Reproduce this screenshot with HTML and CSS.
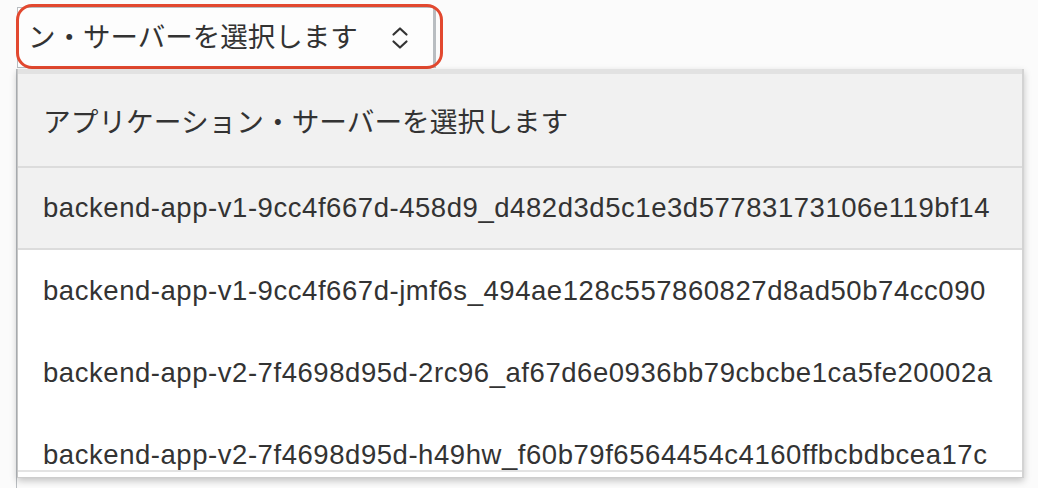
FILE: index.html
```html
<!DOCTYPE html>
<html lang="ja">
<head>
<meta charset="utf-8">
<title>アプリケーション・サーバーを選択</title>
<link rel="stylesheet" href="styles.css">
</head>
<body>
<div class="page">
  <div class="toolbar">
    <div class="select">
      <span class="select-text">ン・サーバーを選択します</span>
      <svg class="chevron" width="18" height="24" viewBox="0 0 18 24" aria-hidden="true">
        <polyline points="2.5,8.5 9,2.5 15.5,8.5" fill="none" stroke="#333" stroke-width="2.2" stroke-linecap="round" stroke-linejoin="round"/>
        <polyline points="2.5,15.5 9,21.5 15.5,15.5" fill="none" stroke="#333" stroke-width="2.2" stroke-linecap="round" stroke-linejoin="round"/>
      </svg>
    </div>
  </div>
  <div class="content">
    <div class="main"></div>
    <div class="side">
      <div class="side-rule"></div>
      <div class="side-glyph">以</div>
      <div class="side-marks">
        <span class="mark mark-a"></span>
        <span class="mark mark-b"></span>
      </div>
      <div class="side-tri"></div>
      <div class="side-rule2"></div>
      <div class="side-rule3"></div>
    </div>
  </div>

  <div class="dropdown">
    <div class="list">
      <div class="option header">アプリケーション・サーバーを選択します</div>
      <div class="option active">backend-app-v1-9cc4f667d-458d9_d482d3d5c1e3d57783173106e119bf14</div>
      <div class="option">backend-app-v1-9cc4f667d-jmf6s_494ae128c557860827d8ad50b74cc090</div>
      <div class="option">backend-app-v2-7f4698d95d-2rc96_af67d6e0936bb79cbcbe1ca5fe20002a</div>
      <div class="option">backend-app-v2-7f4698d95d-h49hw_f60b79f6564454c4160ffbcbdbcea17c</div>
    </div>
  </div>
</div>
</body>
</html>
```

FILE: styles.css
```css
* { box-sizing: border-box; }

html, body {
  margin: 0;
  padding: 0;
}

body {
  background: #fbfbfb;
  font-family: "Liberation Sans", "Noto Sans CJK JP", sans-serif;
  color: #333;
}

.page {
  position: relative;
  width: 1038px;
  height: 488px;
  overflow: hidden;
}

/* ---------- select ---------- */
.toolbar {
  height: 69px;
  padding: 7px 0 0 17px;
}

.select {
  position: relative;
  width: 419px;
  height: 61px;
  border: 1px solid #b9bdc1;
  border-right-width: 3px;
  background: #fdfdfd;
  display: flex;
  align-items: center;
  padding: 0 24px 0 10px;
  font-size: 27.5px;
  line-height: 1.2;
}

.select::after {
  content: "";
  position: absolute;
  top: -4px;
  left: -2px;
  right: -10px;
  bottom: -2px;
  border: 3px solid #e2482f;
  border-radius: 16px;
  pointer-events: none;
}

.select-text {
  flex: 1;
  white-space: nowrap;
}

.chevron {
  display: block;
  flex: none;
  margin-top: 1px;
}

/* ---------- underlying page content ---------- */
.content {
  display: flex;
  height: 419px;
}

.main {
  width: 1023px;
  margin-left: 16px;
  border-left: 1px solid #b9bdc1;
}

.side {
  flex: 1;
  display: flex;
  flex-direction: column;
  overflow: hidden;
}

.side-rule {
  margin-top: 18px;
  height: 2px;
  background: #b5b9bd;
}

.side-glyph {
  margin-top: 34px;
  margin-left: -16px;
  font-family: "Noto Sans CJK JP", sans-serif;
  font-size: 31px;
  line-height: 36px;
  color: #222;
}

.side-marks {
  position: relative;
  height: 12px;
  margin-top: 112px;
}

.mark {
  position: absolute;
  width: 4px;
  height: 4px;
  background: #333;
}

.mark-a { left: 11px; top: 1px; }
.mark-b { left: 0; top: 7px; }

.side-tri {
  margin-top: 13px;
  width: 0;
  height: 0;
  border-top: 4px solid transparent;
  border-bottom: 4px solid transparent;
  border-left: 5px solid #333;
}

.side-rule2 {
  margin-top: 112px;
  height: 2px;
  background: #a2a6aa;
}

.side-rule3 {
  margin-top: 24px;
  height: 2px;
  background: #a2a6aa;
}

/* ---------- dropdown ---------- */
.dropdown {
  position: absolute;
  top: 69px;
  left: 17px;
  width: 1007px;
  background: #fff;
  border-left: 1px solid #c6c6c6;
  border-right: 2px solid #d3d3d3;
  border-bottom: 1px solid #cdcdcd;
  padding-bottom: 5px;
  box-shadow: 0 3px 7px rgba(0, 0, 0, 0.22);
}

.list {
  height: 403px;
  overflow: hidden;
  border-bottom: 2px solid #e3e3e3;
}

.option {
  height: 82px;
  display: flex;
  align-items: center;
  padding-left: 25px;
  font-size: 27.5px;
  letter-spacing: 0.55px;
  white-space: nowrap;
  color: #333;
}

.option.header {
  height: 99px;
  border-top: 5px solid #e2e2e2;
  border-bottom: 2px solid #dcdcdc;
  background: #f1f1f1;
  font-size: 27.7px;
  letter-spacing: 0;
}

.option.active {
  background: #f1f1f1;
  border-bottom: 2px solid #dcdcdc;
}
```
